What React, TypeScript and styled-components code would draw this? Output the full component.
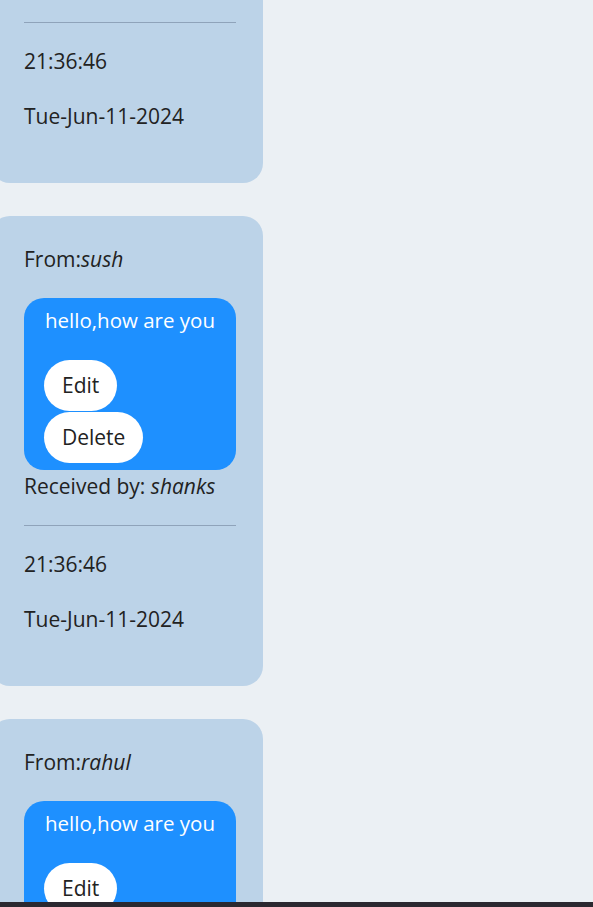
import { useLayoutEffect } from 'react';
import styled, { createGlobalStyle } from 'styled-components';

const GlobalStyle = createGlobalStyle`
    html, body {
        margin: 0;
        padding: 0;
        background-color: #EBF0F4;
    }

    body {
        font-family: "Open Sans", "Noto Sans", sans-serif;
        color: #222222;
    }
`;

const Feed = styled.div`
    display: flex;
    flex-direction: column;
    padding-top: 20px;
    padding-bottom: 40px;
`;

const Card = styled.div`
    box-sizing: border-box;
    width: 273px;
    margin: 0 0 33px -10px;
    padding: 5px 27px 28px 34px;
    background-color: #BCD3E8;
    border-radius: 20px;
`;

const Line = styled.p<{ $flush?: boolean }>`
    margin: ${(props) => (props.$flush ? '0' : '22px 0')};
    font-size: 21px;
    line-height: 33px;
`;

const Name = styled.em`
    font-style: italic;
`;

const Bubble = styled.div`
    padding: 6px 21px 6px 20px;
    background-color: #1E90FF;
    border-radius: 20px;
    color: white;
`;

const BubbleText = styled.p`
    margin: 0 0 23px;
    padding-left: 1px;
    font-size: 20.5px;
    line-height: 33px;
    white-space: nowrap;
`;

const ActionButton = styled.button`
    display: block;
    margin-bottom: 1px;
    padding: 9px 18px;
    border: 0;
    border-radius: 26px;
    background-color: white;
    color: #222222;
    font-family: inherit;
    font-size: 21px;
    line-height: 33px;
    cursor: pointer;
`;

const Divider = styled.hr`
    height: 0;
    margin: 22px 0;
    border: 0;
    border-top: 1px solid #8FA3BA;
`;

const WindowEdge = styled.div`
    position: fixed;
    left: 0;
    right: 0;
    bottom: 0;
    height: 5px;
    background-color: #2B2830;
`;

interface Message {
    id: number,
    from: string,
    to: string,
    text: string,
    time: string,
    date: string
}

const messages: Message[] = [
    { id: 1, from: 'shanks', to: 'sush', text: 'hello,how are you', time: '21:36:46', date: 'Tue-Jun-11-2024' },
    { id: 2, from: 'sush', to: 'shanks', text: 'hello,how are you', time: '21:36:46', date: 'Tue-Jun-11-2024' },
    { id: 3, from: 'rahul', to: 'shanks', text: 'hello,how are you', time: '21:36:46', date: 'Tue-Jun-11-2024' },
    { id: 4, from: 'shanks', to: 'rahul', text: 'hello,how are you', time: '21:36:46', date: 'Tue-Jun-11-2024' },
];

function App() {
    useLayoutEffect(() => {
        window.scrollTo(0, 307);
    }, []);

    return (
        <>
            <GlobalStyle />
            <Feed>
                {messages.map((message) => (
                    <Card key={message.id}>
                        <Line>From:<Name>{message.from}</Name></Line>
                        <Bubble>
                            <BubbleText>{message.text}</BubbleText>
                            <ActionButton>Edit</ActionButton>
                            <ActionButton>Delete</ActionButton>
                        </Bubble>
                        <Line $flush>Received by: <Name>{message.to}</Name></Line>
                        <Divider />
                        <Line>{message.time}</Line>
                        <Line>{message.date}</Line>
                    </Card>
                ))}
            </Feed>
            <WindowEdge />
        </>
    );
}

export default App;
